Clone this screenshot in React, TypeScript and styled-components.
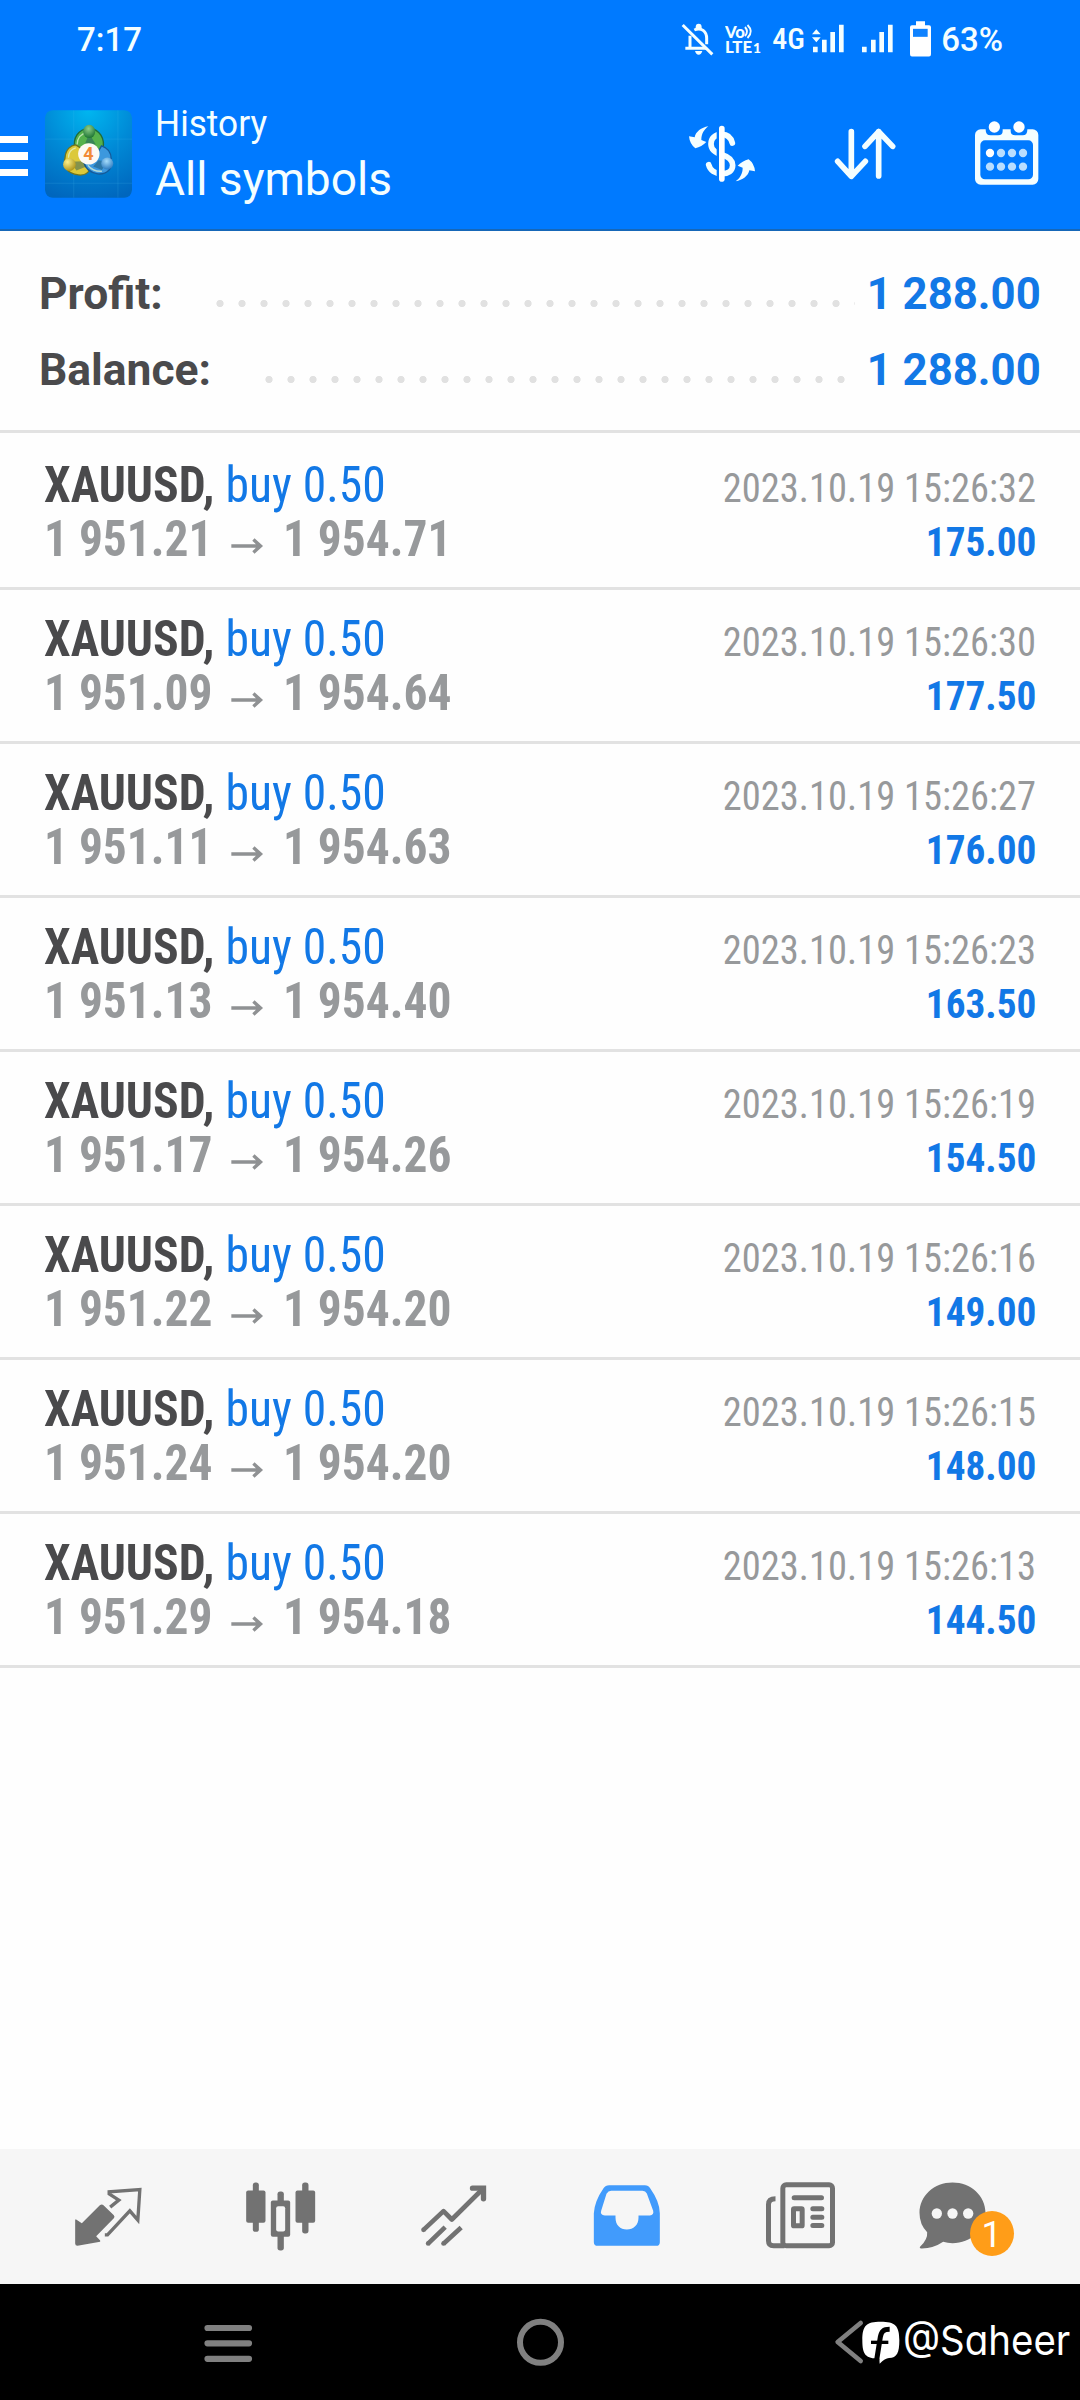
import React from "react";
import styled, { createGlobalStyle } from "styled-components";

const BLUE = "#007aff";
const GREY = "#727272";

const GlobalStyle = createGlobalStyle`
  body {
    margin: 0;
    background: #fff;
    font-family: Roboto, "Liberation Sans", sans-serif;
  }
  svg { display: block; flex: none; }
`;

const Screen = styled.div`
  width: 1080px;
  height: 2400px;
  display: flex;
  flex-direction: column;
  overflow: hidden;
  background: #fefefe;
`;

const Header = styled.header`
  box-sizing: border-box;
  height: 231px;
  flex: none;
  background: ${BLUE};
  border-bottom: 2px solid #1667b8;
  color: #f4feff;
`;

const StatusBar = styled.div`
  display: flex;
  align-items: center;
  height: 79px;
  padding: 0 77px 0 77px;
  font-size: 33px;
  font-weight: 500;
  line-height: 79px;
`;

const StatusItem = styled.div<{ $gap: number }>`
  margin-left: ${(p) => p.$gap}px;
  margin-bottom: 2px;
`;

const StatusFill = styled.div`
  flex: 1;
`;

const Network = styled.span`
  width: 33px;
  margin-left: 9px;
  font-size: 30px;
  font-weight: 500;
  font-stretch: 75%;
  line-height: 77px;
  height: 79px;
`;

const BatteryLevel = styled.span`
  margin-left: 10px;
`;

const AppBar = styled.div`
  display: flex;
  align-items: center;
  height: 150px;
  padding-right: 40px;
`;

const MenuButton = styled.div`
  display: flex;
  flex-direction: column;
  gap: 9px;
  width: 27.5px;
  padding-top: 4px;
`;

const MenuBar = styled.span`
  height: 7.5px;
  background: #fff;
`;

const AppIcon = styled.div`
  margin-left: 17px;
  border-radius: 8px;
  overflow: hidden;
`;

const Titles = styled.div`
  flex: 1;
  margin-left: 23px;
`;

const Overline = styled.div`
  font-size: 36.5px;
  line-height: 48px;
  transform: scaleX(0.965);
  transform-origin: left;
`;

const Title = styled.div`
  padding-top: 1px;
  font-size: 47px;
  line-height: 60px;
  transform: scaleX(0.98);
  transform-origin: left;
`;

const Actions = styled.div`
  display: flex;
  align-items: center;
  gap: 78px;
`;

const Summary = styled.section`
  padding: 25px 39px 22px 39px;
  border-bottom: 3px solid #e2e2e2;
  font-size: 44.4px;
  font-weight: 700;
  line-height: 76px;
`;

const SummaryRow = styled.div`
  display: flex;
  height: 76px;
`;

const SummaryLabel = styled.span`
  color: #4a4a4c;
`;

const Leader = styled.span`
  flex: 1;
  margin: 0 9px 0 46.5px;
  background: radial-gradient(circle at 11px 47.5px, #e1e1e1 3.2px, transparent 4px) repeat-x 0 0 / 22px 76px;
`;

const SummaryValue = styled.span`
  transform: scaleX(0.985);
  transform-origin: right;
  color: #1278e6;
`;

const DealList = styled.main`
  flex: 1;
  padding-top: 3px;
`;

const Deal = styled.article`
  box-sizing: border-box;
  display: flex;
  justify-content: space-between;
  height: 154px;
  padding: 22px 44px 0;
  border-bottom: 3px solid #e2e2e2;
  font-stretch: 75%;
  line-height: 54px;
  white-space: nowrap;
`;

const DealSide = styled.div<{ $end?: boolean }>`
  display: flex;
  flex-direction: column;
  width: 450px;
  align-items: ${(p) => (p.$end ? "flex-end" : "flex-start")};
  padding-top: ${(p) => (p.$end ? 3 : 0)}px;
`;

const Order = styled.div`
  font-size: 50.5px;
  transform: scaleX(0.943);
  transform-origin: left;
  color: #1278e6;
`;

const SymbolName = styled.b`
  font-weight: 700;
  color: #4a4a4c;
`;

const Prices = styled.div`
  display: flex;
  font-size: 50.5px;
  font-weight: 700;
  transform: scaleX(0.939);
  transform-origin: left;
  color: #97999b;
`;

const ArrowSlot = styled.span`
  display: flex;
  justify-content: center;
  width: 75px;
  padding-top: 26px;
  height: 20px;
`;

const DealTime = styled.time`
  font-size: 41.3px;
  transform: scaleX(0.932);
  transform-origin: right;
  color: #97999b;
`;

const DealProfit = styled.div`
  font-size: 41.3px;
  font-weight: 700;
  transform: scaleX(0.95);
  transform-origin: right;
  color: #1278e6;
`;

const TabBar = styled.nav`
  display: grid;
  grid-template-columns: repeat(6, 173px);
  flex: none;
  height: 135px;
  padding-left: 21.5px;
  background: #f6f6f6;
`;

const Tab = styled.div`
  position: relative;
  display: flex;
  align-items: center;
  justify-content: center;
`;

const Badge = styled.span`
  position: absolute;
  left: 83px;
  top: 62px;
  width: 44px;
  height: 45px;
  border-radius: 50%;
  background: #ff9d18;
  color: #fff;
  font-size: 36px;
  line-height: 48px;
  text-align: center;
`;

const SystemNav = styled.footer`
  position: relative;
  display: grid;
  grid-template-columns: repeat(3, 311.3px);
  justify-items: center;
  align-items: center;
  flex: none;
  height: 116px;
  padding-left: 73px;
  background: #000;
`;

const Watermark = styled.div`
  position: absolute;
  left: 862px;
  top: 36px;
  display: flex;
  color: #fff;
`;

const Handle = styled.span`
  margin-left: 3px;
  margin-top: -1px;
  font-family: Inter, Lato, sans-serif;
  font-feature-settings: "cv11" 1;
  font-size: 41px;
  font-weight: 400;
  line-height: 42px;
  transform: scaleX(0.937);
  transform-origin: left;
`;

const BellOff = () => (
  <svg width="34" height="34" viewBox="30 33 102 102" fill="none" stroke="#f4feff" strokeWidth="9">
    <path d="M73 57C94 47 110 62 110 82V100M60 74V110M46 112H108" />
    <path d="M38 42L127 130" strokeWidth="9" />
    <path d="M77 48A9 10 0 0 1 95 48V54H77ZM75 120H97Q94 131 86 131T75 120Z" fill="#f4feff" stroke="none" />
  </svg>
);

const VoLte = () => (
  <svg width="38" height="32" viewBox="0 0 38 32" fill="#f4feff" fontFamily="Lato, sans-serif" fontWeight="900">
    <text x="0" y="15" fontSize="16" textLength="20" lengthAdjust="spacingAndGlyphs">Vo</text>
    <path d="M20 4Q24 8.500 20 13M22.500 2Q29 8.500 22.500 15" fill="none" stroke="#f4feff" strokeWidth="1.900" />
    <text x="0" y="30" fontSize="16" textLength="27" lengthAdjust="spacingAndGlyphs">LTE</text>
    <text x="28" y="30" fontSize="13.500" textLength="8" lengthAdjust="spacingAndGlyphs">1</text>
  </svg>
);

const Signal = ({ data }: { data?: boolean }) => (
  <svg width="32" height="29" viewBox="450 72 96 87" fill="#f4feff">
    <path d="M453 140h14v17h-14zM480 119h14v38h-14zM505 96h14v61h-14zM531 74h14v83h-14z" />
    {data && <path d="M463 88L476 103H450ZM450 112H476L463 127Z" />}
  </svg>
);

const Battery = () => (
  <svg width="21" height="36" viewBox="747 61 63 107">
    <path d="M765 61H792V73H804Q810 73 810 79V160Q810 167 804 167H753Q747 167 747 160V79Q747 73 753 73H765Z" fill="#fff" />
    <path d="M756 84H800V108H756Z" fill="#0f82ff" />
  </svg>
);

const MetaTrader = () => (
  <svg width="87" height="88" viewBox="44 48 260 261">
    <defs>
      <radialGradient id="sky" cx="0.5" cy="0" r="1.05">
        <stop offset="0" stopColor="#00b6f0" />
        <stop offset="0.5" stopColor="#0089d6" />
        <stop offset="1" stopColor="#0066bd" />
      </radialGradient>
      <radialGradient id="leaf" cx="0.45" cy="0.3" r="0.7">
        <stop offset="0" stopColor="#8fce8a" />
        <stop offset="1" stopColor="#1c7433" />
      </radialGradient>
      <radialGradient id="gold" cx="0.35" cy="0.3" r="0.8">
        <stop offset="0" stopColor="#fbf08a" />
        <stop offset="1" stopColor="#a88c10" />
      </radialGradient>
      <radialGradient id="azure" cx="0.45" cy="0.3" r="0.8">
        <stop offset="0" stopColor="#a5dcfb" />
        <stop offset="1" stopColor="#1b6db8" />
      </radialGradient>
    </defs>
    <rect x="44" y="48" width="260" height="261" rx="20" fill="url(#sky)" />
    <path d="M130 48V309M262 48V309M44 134H304M44 266H304" stroke="#4dc4f0" strokeOpacity="0.25" strokeWidth="2" />
    <g strokeWidth="4">
      <path d="M133 165C126 130 143 105 176 101C208 105 224 132 217 165L198 176H150Z" fill="#55b14c" stroke="#1f6b3a" />
      <path d="M135 151C122 152 106 164 104 188C98 216 108 236 144 241C160 243 172 236 176 228L150 160Z" fill="#dcc93a" stroke="#6f7420" />
      <path d="M213 154C232 160 242 174 242 194C248 224 228 240 202 238C178 234 164 220 160 204L200 176Z" fill="#3c98de" stroke="#145b9b" />
    </g>
    <path d="M140 150Q141 119 173 113M114 190Q114 166 136 160M172 212Q188 232 214 230" fill="none" stroke="#e4f6d5" strokeOpacity="0.7" strokeWidth="4" />
    <path d="M120 202L158 200L168 216L138 228ZM204 197L230 202L214 226L188 216ZM176 118L196 150L164 146Z" fill="#174f64" fillOpacity="0.45" />
    <ellipse cx="176" cy="111" rx="18" ry="20" fill="url(#leaf)" />
    <circle cx="117" cy="210" r="19" fill="url(#gold)" />
    <circle cx="230" cy="207" r="18" fill="url(#azure)" />
    <circle cx="175" cy="178" r="32" fill="#fdf9f3" />
    <text x="174" y="196" fontFamily="Roboto, sans-serif" fontSize="54" fontWeight="700" textAnchor="middle" fill="#f28a35">4</text>
  </svg>
);

const curvedArrow = "M145 380C124 384 107 396 104 413L87 410Q89 433 106 446Q125 441 139 427L124 421C124 403 132 390 145 380Z";

const CurrencySwap = () => (
  <svg width="68" height="58" viewBox="84 376 204 174">
    <path
      d="M217 430C212 411 200 404 186 404C164 404 153 416 153 433C153 452 168 460 186 465C206 471 218 480 218 497C218 514 204 522 186 522C166 522 150 512 146 495"
      fill="none"
      stroke="#f4feff"
      strokeWidth="17"
      strokeLinecap="round"
    />
    <path d="M173.500 384V542" stroke={BLUE} strokeWidth="7" />
    <path d="M185.500 387V538" stroke="#fff" strokeWidth="17" strokeLinecap="round" />
    <path d={curvedArrow} fill="#f4feff" />
    <path d={curvedArrow} fill="#f4feff" transform="rotate(180 186 462.500)" />
  </svg>
);

const SortArrows = () => (
  <svg width="62" height="52" viewBox="522 384 186 156" fill="none" stroke="#f4feff" strokeWidth="17" strokeLinecap="round" strokeLinejoin="round">
    <path d="M574 395V528M533 484L574 529L616 484M656 528V395M615 439L656 395L698 439" />
  </svg>
);

const Calendar = () => (
  <svg width="66" height="66" viewBox="942 362 198 198">
    <rect x="945" y="387" width="190" height="166" rx="17" fill="#f4feff" />
    <rect x="961" y="420" width="158" height="117" rx="14" fill={BLUE} />
    <path d="M977 380V388Q977 405 992 405H1014Q1028 405 1028 392V380ZM1052 380V392Q1052 405 1066 405H1088Q1102 405 1102 388V380Z" fill={BLUE} />
    <circle cx="1003" cy="380" r="17" fill="#fff" />
    <circle cx="1077" cy="380" r="17" fill="#fff" />
    {[458, 499].map((cy) =>
      [990, 1023, 1056, 1089].map((cx) => (
        <circle key={`${cx}-${cy}`} cx={cx} cy={cy} r="12.500" fill={cx === 990 && cy === 458 ? "#fff" : "#b9deff"} />
      ))
    )}
  </svg>
);

const PriceArrow = () => (
  <svg width="35" height="16" viewBox="0 0 35 16" fill="none" stroke="#8f9193" strokeWidth="3.600">
    <path d="M0.500 8H32M24 1.500L31.500 8L24 14.500" />
  </svg>
);

const QuotesIcon = () => (
  <svg width="72" height="72" viewBox="97.500 151.500 216 216">
    <path d="M181 224Q187 220 192 224L223 254Q227 259 223 263L170 317L182 330V334L114 346Q107 346 107 339V267H110L127 278Z" fill={GREY} />
    <path d="M212 230L238 209L209 190V184L301 177L295 269L271 241L204 313H196" fill="none" stroke={GREY} strokeWidth="10" />
  </svg>
);

const ChartIcon = () => (
  <svg width="72" height="72" viewBox="616.500 151.500 216 216" fill={GREY}>
    <rect x="640" y="156" width="18" height="148" rx="8" />
    <rect x="620" y="180" width="58" height="97" rx="6" />
    <rect x="788" y="156" width="19" height="153" rx="8" />
    <rect x="768" y="180" width="59" height="97" rx="6" />
    <rect x="714" y="183" width="19" height="177" rx="8" />
    <rect x="694" y="210" width="58" height="109" rx="6" />
    <rect x="710" y="227" width="27" height="76" rx="6" fill="#f6f6f6" />
  </svg>
);

const TradeIcon = () => (
  <svg width="72" height="72" viewBox="1135.500 151.500 216 216" fill="none" stroke={GREY} strokeWidth="14">
    <path d="M1152 298L1212 242L1237 267L1328 177" strokeLinejoin="round" />
    <path d="M1299 173H1332V205" strokeWidth="16" strokeLinecap="round" />
    <path d="M1165 340L1217 290M1212 340L1265 291" />
    <g fill={GREY} stroke="none">
      <circle cx="1152" cy="298" r="7" />
      <circle cx="1166" cy="339" r="7" />
      <circle cx="1212" cy="339" r="7" />
    </g>
  </svg>
);

const HistoryIcon = () => (
  <svg width="72" height="72" viewBox="94.500 151.500 216 216">
    <path
      d="M149 164H256Q267 164 272 173Q301 214 301 248V335Q301 346 290 346H115Q103 346 103 335V248Q105 212 132 173Q138 164 149 164Z"
      fill="#419bfc"
    />
    <path d="M155 181H249Q258 181 262 189L281 241Q284 254 271 255H237V262C237 284 222 297 202 297S168 284 168 262V255H136Q121 254 125 241L141 190Q146 181 155 181Z" fill="#f6f6f6" />
  </svg>
);

const NewsIcon = () => (
  <svg width="72" height="72" viewBox="613.500 151.500 216 216" fill="none" stroke={GREY} strokeWidth="15">
    <rect x="670" y="163" width="149" height="183" rx="10" />
    <path d="M648 205Q627 205 627 222V331Q627 346 642 346H675" />
    <path d="M704 202H786M760 235H787M760 260H787M760 285H787" strokeLinecap="round" />
    <rect x="702" y="235" width="26" height="51" rx="2" />
  </svg>
);

const ChatIcon = () => (
  <svg width="110" height="84" viewBox="1075.500 133.500 330 252">
    <path d="M1179 156C1234 156 1278 196 1278 247S1234 338 1179 338Q1164 338 1151 334Q1120 355 1084 354Q1078 351 1083 347Q1105 326 1103 305Q1080 283 1080 247C1080 196 1124 156 1179 156Z" fill={GREY} />
    <g fill="#f6f6f6">
      <circle cx="1132" cy="249" r="15.500" />
      <circle cx="1179" cy="249" r="15.500" />
      <circle cx="1226" cy="249" r="15.500" />
    </g>
  </svg>
);

const RecentsIcon = () => (
  <svg width="50" height="40" viewBox="0 0 50 40" stroke="#808080" strokeWidth="6.200" strokeLinecap="round">
    <path d="M3.500 6H45M3.500 21.300H45M3.500 36.800H45" />
  </svg>
);

const HomeIcon = () => (
  <svg width="48" height="48" viewBox="0 0 48 48" fill="none" stroke="#808080" strokeWidth="6">
    <circle cx="24.500" cy="24.300" r="20.500" />
  </svg>
);

const BackIcon = () => (
  <svg width="48" height="48" viewBox="22 54 144 144" fill="none" stroke="#808080" strokeWidth="14" strokeLinecap="round" strokeLinejoin="round">
    <path d="M123 69L54 126L123 183" />
  </svg>
);

const SocialMark = () => (
  <svg width="38" height="44" viewBox="126 60 114 132">
    <path
      d="M182 65C225 65 238 76 238 121C238 158 231 174 207 174Q195 175 179 191L178 176C137 176 127 165 127 121C127 76 139 65 182 65Z"
      fill="#fff"
    />
    <path d="M209 88C190 88 184 94 181 111L170 180" fill="none" stroke="#000" strokeWidth="15" />
    <path d="M153 127H205" stroke="#000" strokeWidth="10" />
  </svg>
);

const totals = [
  { label: "Profit:", value: "1 288.00" },
  { label: "Balance:", value: "1 288.00" },
];

const deals = [
  { open: "1 951.21", close: "1 954.71", time: "15:26:32", profit: "175.00" },
  { open: "1 951.09", close: "1 954.64", time: "15:26:30", profit: "177.50" },
  { open: "1 951.11", close: "1 954.63", time: "15:26:27", profit: "176.00" },
  { open: "1 951.13", close: "1 954.40", time: "15:26:23", profit: "163.50" },
  { open: "1 951.17", close: "1 954.26", time: "15:26:19", profit: "154.50" },
  { open: "1 951.22", close: "1 954.20", time: "15:26:16", profit: "149.00" },
  { open: "1 951.24", close: "1 954.20", time: "15:26:15", profit: "148.00" },
  { open: "1 951.29", close: "1 954.18", time: "15:26:13", profit: "144.50" },
];

export default function App() {
  return (
    <Screen>
      <GlobalStyle />
      <Header>
        <StatusBar>
          <span>7:17</span>
          <StatusFill />
          <StatusItem $gap={0}><BellOff /></StatusItem>
          <StatusItem $gap={11}><VoLte /></StatusItem>
          <Network>4G</Network>
          <StatusItem $gap={7}><Signal data /></StatusItem>
          <StatusItem $gap={17}><Signal /></StatusItem>
          <StatusItem $gap={17}><Battery /></StatusItem>
          <BatteryLevel>63%</BatteryLevel>
        </StatusBar>
        <AppBar>
          <MenuButton>
            <MenuBar />
            <MenuBar />
            <MenuBar />
          </MenuButton>
          <AppIcon><MetaTrader /></AppIcon>
          <Titles>
            <Overline>History</Overline>
            <Title>All symbols</Title>
          </Titles>
          <Actions>
            <CurrencySwap />
            <SortArrows />
            <Calendar />
          </Actions>
        </AppBar>
      </Header>
      <Summary>
        {totals.map((t) => (
          <SummaryRow key={t.label}>
            <SummaryLabel>{t.label}</SummaryLabel>
            <Leader />
            <SummaryValue>{t.value}</SummaryValue>
          </SummaryRow>
        ))}
      </Summary>
      <DealList>
        {deals.map((d) => (
          <Deal key={d.time}>
            <DealSide>
              <Order>
                <SymbolName>XAUUSD,</SymbolName> buy 0.50
              </Order>
              <Prices>
                <span>{d.open}</span>
                <ArrowSlot><PriceArrow /></ArrowSlot>
                <span>{d.close}</span>
              </Prices>
            </DealSide>
            <DealSide $end>
              <DealTime>2023.10.19 {d.time}</DealTime>
              <DealProfit>{d.profit}</DealProfit>
            </DealSide>
          </Deal>
        ))}
      </DealList>
      <TabBar>
        <Tab><QuotesIcon /></Tab>
        <Tab><ChartIcon /></Tab>
        <Tab><TradeIcon /></Tab>
        <Tab><HistoryIcon /></Tab>
        <Tab><NewsIcon /></Tab>
        <Tab>
          <ChatIcon />
          <Badge>1</Badge>
        </Tab>
      </TabBar>
      <SystemNav>
        <RecentsIcon />
        <HomeIcon />
        <BackIcon />
        <Watermark>
          <SocialMark />
          <Handle>@Saheer</Handle>
        </Watermark>
      </SystemNav>
    </Screen>
  );
}
